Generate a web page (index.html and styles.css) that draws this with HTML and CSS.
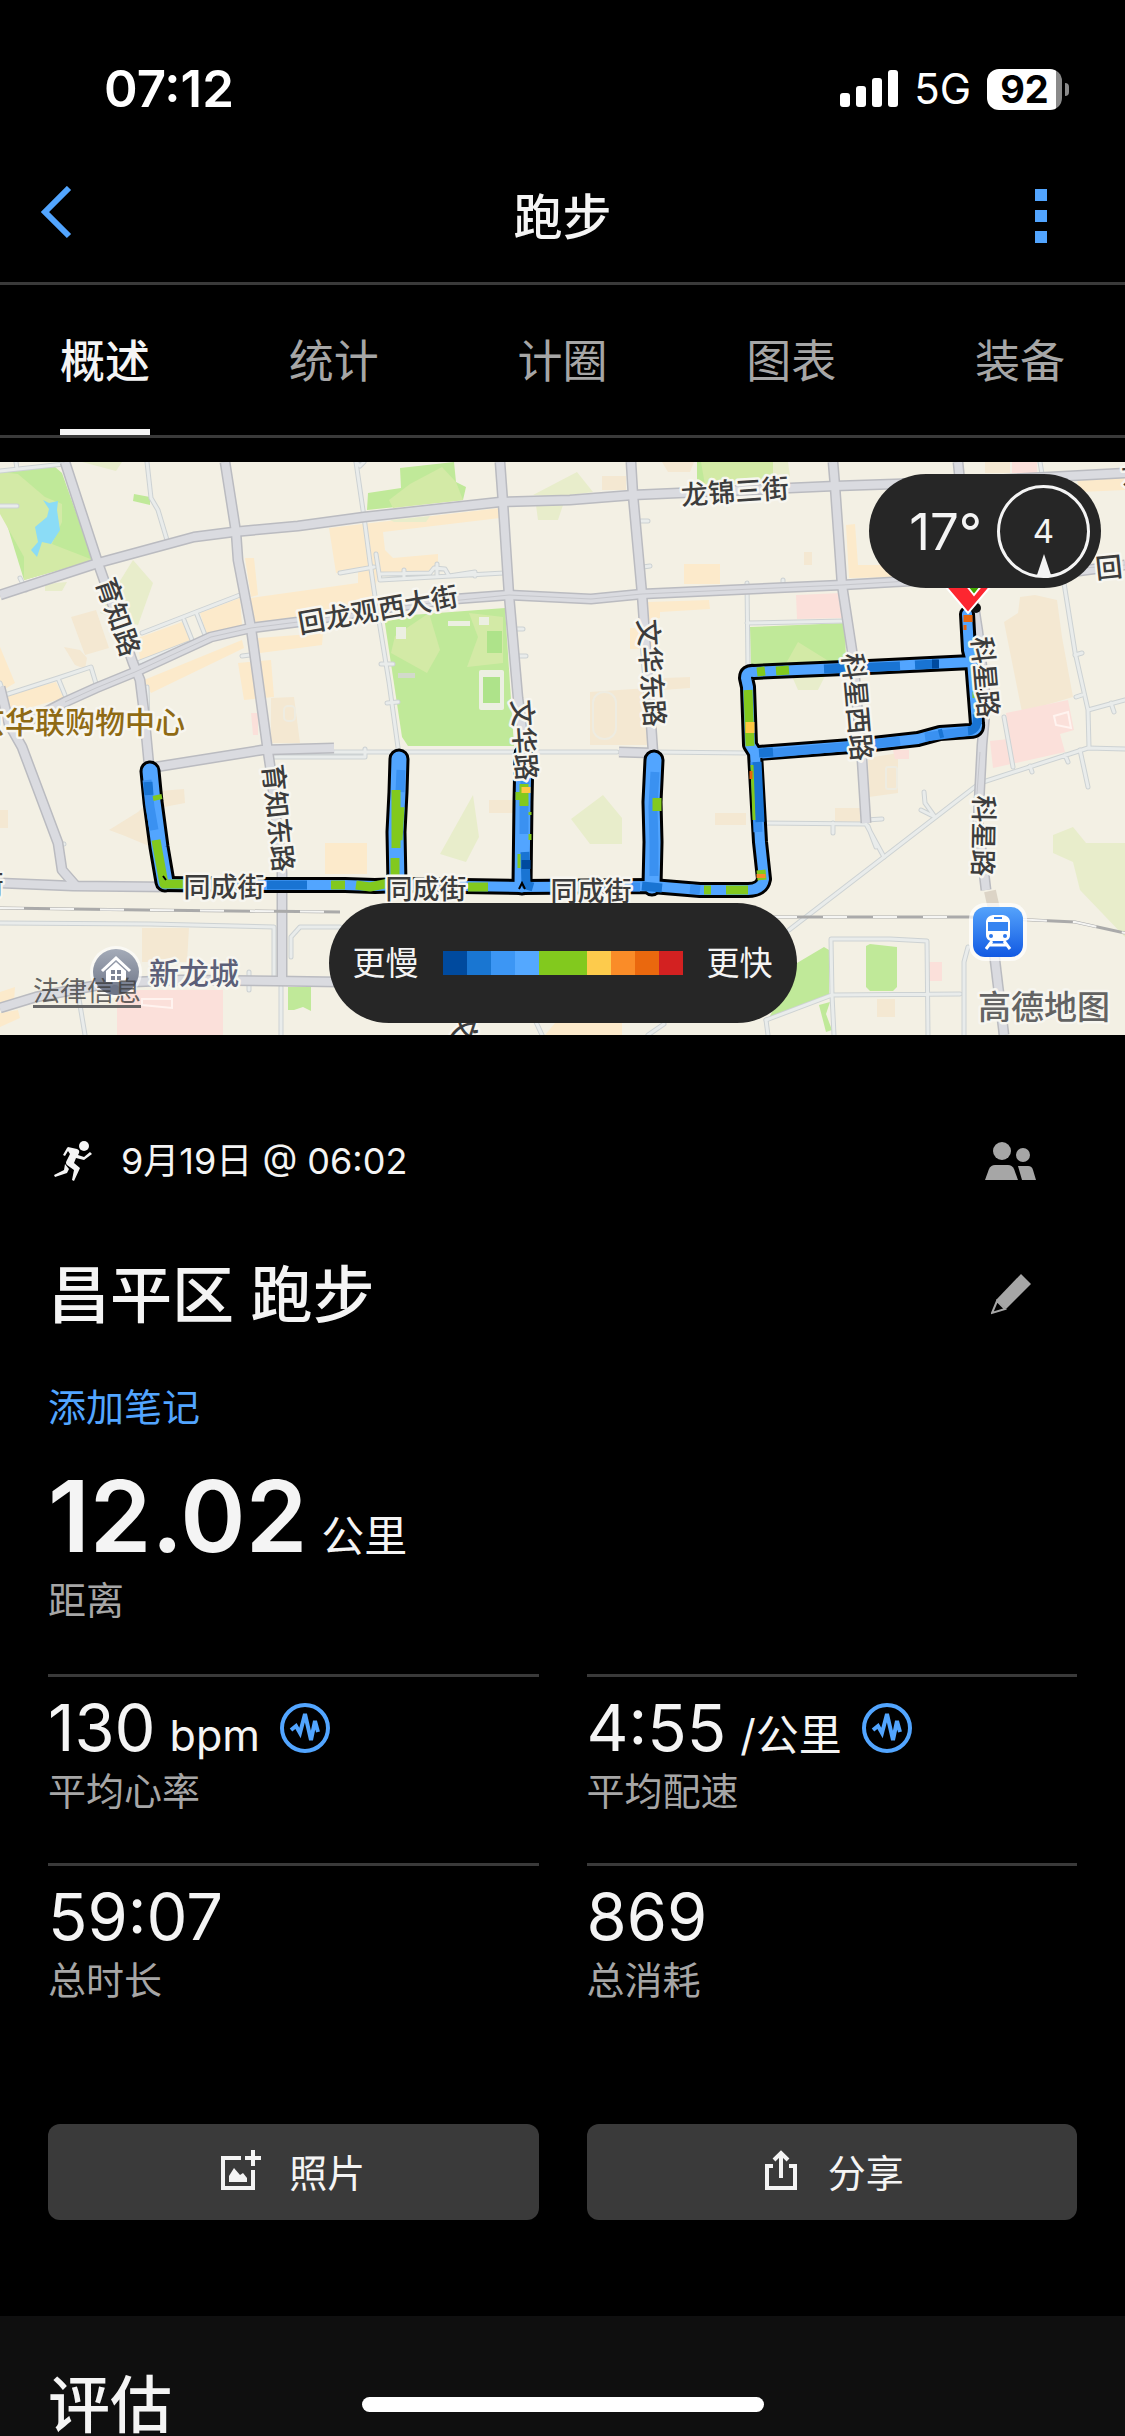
FILE: index.html
```html
<!DOCTYPE html>
<html lang="zh-CN">

<head>
    <meta charset="UTF-8">
    <meta name="viewport" content="width=device-width, initial-scale=1.0">
    <title>跑步</title>
    <link rel="stylesheet" href="styles.css">
</head>

<body>
    <div class="status-bar">
        <span class="time">07:12</span>
        <div class="status-icons">
            <svg class="signal" viewBox="0 0 58 38" aria-hidden="true">
                <rect x="0" y="23" width="10" height="14" rx="3" />
                <rect x="16" y="16" width="10" height="21" rx="3" />
                <rect x="32" y="8" width="10" height="29" rx="3" />
                <rect x="48" y="0" width="10" height="37" rx="3" />
            </svg>
            <span class="network">5G</span>
            <span class="battery">92</span>
        </div>
    </div>

    <header class="header">
        <button class="icon-button back" aria-label="返回">
            <svg width="36" height="60" viewBox="0 0 36 60" aria-hidden="true">
                <path d="M33 2L9 26L33 50" fill="none" stroke="#52a5ff" stroke-width="6" />
            </svg>
        </button>
        <h1>跑步</h1>
        <button class="icon-button more" aria-label="更多">
            <svg width="12" height="54" viewBox="0 0 12 54" fill="#52a5ff" aria-hidden="true">
                <rect width="12" height="12" />
                <rect y="21" width="12" height="12" />
                <rect y="42" width="12" height="12" />
            </svg>
        </button>
    </header>

    <nav class="tabs">
        <a href="#overview" class="tab active">概述</a>
        <a href="#stats" class="tab">统计</a>
        <a href="#laps" class="tab">计圈</a>
        <a href="#charts" class="tab">图表</a>
        <a href="#gear" class="tab">装备</a>
    </nav>

    <div class="map">
        <svg class="map-canvas" viewBox="0 0 1125 573" preserveAspectRatio="xMidYMid slice">
            <defs>
                <linearGradient id="trainFill" x1="0" y1="0" x2="0" y2="1">
                    <stop offset="0" stop-color="#55a3fb" />
                    <stop offset="1" stop-color="#1159e2" />
                </linearGradient>
                <linearGradient id="homeFill" x1="0" y1="0" x2="0" y2="1">
                    <stop offset="0" stop-color="#a4abb8" />
                    <stop offset="1" stop-color="#6d7486" />
                </linearGradient>

                <g id="majorRoads">
                    <path d="M65 0L98 101L133 201L140 218L144 250L149 303" />
                    <path d="M0 133L98 101L194 75L233 70L298 64L364 55L500 40L570 38L633 33L835 24L955 20L1125 11" />
                    <path d="M30 258L65 240L96 226L135 210L211 175L251 166L298 160L393 145L455 137L509 133L591 137L642 132L842 123L893 120L1064 111L1125 103" />
                    <path d="M225 0L236 70L238 98L251 166L267 283L271 310L282 411L282 520" />
                    <path d="M500 0L503 41L509 133L518 236L525 290" />
                    <path d="M631 0L633 33L642 132L653 290" />
                    <path d="M833 0L835 24L842 123L853 195L862 298L866 361" />
                    <path d="M958 0L970 118L978 170L986 240L982 283L978 360L986 428" />
                    <path d="M0 421L73 424L170 425L520 426L650 426" />
                    <path d="M0 225L9 262L22 285L58 381L62 408L76 424" />
                    <path d="M156 305L262 288L334 286" />
                    <path d="M0 546L36 535L109 521L182 518L276 519L340 520" />
                    <path d="M619 290L652 291" />
                    <path d="M994 490L1004 573" />
                </g>
                <g id="minorRoads">
                    <path d="M0 9L64 2M16 0L17 7" />
                    <path d="M147 0L151 36L158 48L167 78" />
                    <path d="M356 0L364 55L370 100L374 128L389 220L400 300M356 0L360 4L364 0" />
                    <path d="M376 92L380 118L504 111M380 112L430 111L434 106L445 107L449 114L475 110L475 114M404 108L404 116M437 102L437 114" />
                    <path d="M340 111L374 105" />
                    <path d="M142 171L196 150L240 133M184 158L192 178M196 150L205 173M140 200L189 181" />
                    <path d="M5 233L58 216L91 205L97 225M58 216L67 238M0 221L14 265" />
                    <path d="M381 202L393 202M387 241L398 240M242 194L250 193M517 167L523 167M518 194L526 194" />
                    <path d="M147 225L149 303M641 59L648 59M643 105L650 104" />
                    <path d="M747 121L748 205M747 161L845 159M783 118L783 127" />
                    <path d="M1040 0L1043 18M1064 121L1075 190L1088 248L1089 285M1088 248L1125 238M1111 241L1114 250" />
                    <path d="M1075 193L1082 191M1076 235L1082 233M1004 255L1013 305" />
                    <path d="M789 468L884 395L980 321L1088 286L1125 287M1030 304L1032 310M1065 293L1068 300" />
                    <path d="M762 361L866 362L884 395M866 358L882 357M833 361L833 371M868 364L876 385" />
                    <path d="M924 330L925 341L935 355L921 348M1080 288L1088 325" />
                    <path d="M273 290L617 290M273 295L365 295L365 287M653 290L748 291" />
                    <path d="M0 461L150 462L274 465L274 518M340 465L300 465L291 475L291 495" />
                    <path d="M78 531L85 573M281 525L281 573M249 510L249 528M57 383L64 382" />
                    <path d="M834 573L832 533L831 477L890 477L927 479L928 573M766 558L832 533L960 532" />
                    <path d="M968 485L964 500L964 573M766 558L768 573M648 573L664 562M536 560L542 573" />
                    <path d="M17 44L0 44M20 116L26 128" />
                </g>
                <g id="loops">
                    <path d="M165 422L267 423L345 423L375 424L400 423L522 425L652 424L700 428L748 428Q762 428 764 417L760 380L755 291L750 283L748 225L746 216Q746 209 754 210L773 209L868 205L972 200L969 188L967 152" />
                    <path d="M972 198L977 262Q978 269 970 269L940 271L918 277L864 283L759 291" />
                </g>
                <g id="stems">
                    <path d="M150 309L153 340L159 385L165 420" />
                    <path d="M399 297L398 330L396 370L397 422" />
                    <path d="M524 292L523 340L522 423" />
                    <path d="M654 298L652 340L653 380L652 424" />
                </g>
            </defs>

            <rect width="1125" height="573" fill="#f3f0e4" />

            <!-- blocks -->
            <g fill="#fceacb">
                <path d="M329 66L500 46V56L383 70L385 88L393 96L438 92V108L378 113L374 131L374 147L251 161V136L358 121V110L336 111Z" />
                <path d="M245 96H254L258 133L251 135Z" />
                <path d="M200 151L240 136L242 163L207 173ZM138 176L182 160L191 180L140 198Z" />
                <path d="M144 218L242 178L244 186L151 231ZM258 176L323 171L322 183L260 191Z" />
                <path d="M238 201L271 198L274 235L244 238ZM5 233L56 220L64 236L10 251ZM0 185L15 221L0 230Z" />
                <path d="M846 63L855 62L858 103H891L900 115L849 116ZM684 102H720V122H684Z" />
                <path d="M648 140L709 138L710 147L660 150V156L649 158ZM630 166H660V187H630Z" />
                <path d="M1077 18L1125 16V28L1080 30ZM325 381H367V412H325ZM555 561H622V573H545Z" />
                <path d="M0 530L15 525L14 540L0 545ZM0 551L18 548L20 556L0 565Z" />
            </g>
            <g fill="#f4e8d2">
                <path d="M71 155L96 148L109 186L85 193ZM64 185L80 188L87 196L85 207L75 203Z" />
                <path d="M271 236L294 235L300 281H271ZM602 14H626V28H602ZM662 0H694L690 10H668Z" />
                <path d="M590 230L648 226L665 216L690 215V226L650 229L648 283H590Z" />
                <path d="M1020 135L1035 133L1057 138L1062 175L1073 235L1022 250L1004 160L1018 151Z" />
                <path d="M109 368L138 350L160 329L184 327L185 341L164 345L149 384L125 374Z" />
                <path d="M0 348H8V366H0ZM489 338H513V351H489ZM142 466H189L187 500H142Z" />
                <path d="M715 351H746V363H715ZM835 346H860V360H835ZM868 296L898 291V331L869 335Z" />
                <path d="M877 537H895V555H877ZM804 90H812V103H804ZM985 0H1010V11H985Z" />
            </g>
            <g fill="#e8edcb">
                <path d="M82 0H122L116 9ZM133 98L153 121L138 163L100 151ZM45 122L67 120L62 129H45Z" />
                <path d="M533 33L577 10L593 30L555 35ZM536 43H563L558 58H538ZM773 0H788L790 14L773 24Z" />
                <path d="M473 333L479 375L466 400L440 392ZM571 357L603 333L622 356V382H590Z" />
                <path d="M1053 373L1073 365L1086 381H1125V475L1080 428L1073 400L1053 391Z" />
                <path d="M791 212H826L818 228H798ZM390 58L430 54L426 60H394Z" />
            </g>
            <g fill="#c0e999">
                <path d="M0 10L55 5L62 11L93 98L24 118L0 40Z" />
                <path d="M400 6L454 0L456 20L466 25L463 38L367 48L368 31L401 26Z" />
                <path d="M384 155L505 146L514 284H408L402 275Z" />
                <path d="M697 0H773V20L697 23ZM750 165L845 161L846 201L751 206Z" />
                <path d="M797 501L824 485L829 488V533L769 556Z" />
                <path d="M870 482L897 485V525L893 529H870L866 525V484Z" />
                <path d="M134 32L150 35V43L133 39ZM288 525H311V549L303 545L294 548H288Z" />
                <path d="M819 543L830 540L826 552L832 568L826 570Z" />
            </g>
            <g fill="#d3eaa6">
                <path d="M0 10L18 12L45 35L62 42V60L52 82L93 98L24 118L24 95L0 52Z" />
                <path d="M389 38L410 22L442 5L456 20L463 38L393 46Z" />
                <path d="M429 151L440 188L427 211L391 191L395 174ZM469 151L503 155V201L467 205L478 175Z" />
                <path d="M701 0H773V20L705 23ZM798 180L835 203L784 205Z" />
            </g>
            <g fill="#fbe0da">
                <path d="M796 133L841 131L842 156L797 157ZM251 251H258V273H253Z" />
                <path d="M1006 251L1068 238L1074 268L1060 272L1065 290L993 306L990 279L1008 277Z" />
                <path d="M117 528H223V573H117ZM893 288H909V297H895ZM929 500H942V519H929ZM1012 0H1037V11H1012Z" />
            </g>
            <path d="M43 38L49 41L58 39L57 48L60 68L51 82L42 80L37 95L31 88L38 80L35 65L47 55L49 47Z" fill="#8bdcf6" />
            <rect x="487" y="169" width="15" height="22" fill="#aee38a" />
            <g fill="#ecefe2">
                <rect x="479" y="208" width="25" height="40" rx="2" />
                <rect x="396" y="165" width="10" height="12" />
                <rect x="479" y="155" width="10" height="8" />
                <rect x="448" y="159" width="22" height="5" />
            </g>
            <rect x="483" y="215" width="17" height="26" fill="#aee38a" />
            <rect x="398" y="211" width="17" height="5" fill="#d3dacb" />
            <g fill="none" stroke="#eeece1" stroke-width="2">
                <rect x="593" y="230" width="23" height="47" rx="11" />
                <rect x="284" y="244" width="11" height="15" rx="4" />
                <rect x="886" y="305" width="11" height="22" rx="2" />
                <path d="M142 537H172V546L142 543ZM1054 254L1068 250L1071 266L1056 263Z" stroke="#fff3ef" />
            </g>

            <!-- roads -->
            <use href="#minorRoads" class="minor-edge" />
            <use href="#minorRoads" class="minor-fill" />
            <use href="#majorRoads" class="major-edge" />
            <use href="#majorRoads" class="major-fill" />
            <path d="M65 240L96 226L135 210L211 175L251 166L298 160L393 145L509 133L591 137L642 132L842 123L893 120L1125 103M980 290L976 345" fill="none" stroke="#c6c7cc" stroke-width="1" />
            <path d="M990 429L994 447" stroke="#dcd4c6" stroke-width="12" />
            <path class="rail" d="M0 446L145 448L340 450M773 455L969 455L1075 460L1125 471" />
            <path class="rail-dash" d="M0 446L145 448L340 450M773 455L969 455L1075 460L1125 471" />

            <!-- running route -->
            <use href="#loops" class="route-edge" />
            <use href="#stems" class="route-edge wide" />
            <use href="#loops" class="route" />
            <use href="#stems" class="route wide" />
            <g class="route-part">
                <g stroke="#3a91f1">
                    <path d="M147 318L150 345L154 368M401 308L400 330M655 310L653 345L654 382L654 414" />
                    <path d="M524 340L524 372M525 310V322M762 292L864 283L900 279M925 275L970 269" />
                    <path d="M600 425L640 425M690 427L700 428M755 300L758 370" />
                </g>
                <g stroke="#1974d3">
                    <path d="M148 320L149 333M267 423L307 423M525 390L526 423L533 425M759 291L773 290M757 300L760 360" />
                    <path d="M824 207L900 204M915 203L938 202M977 252Q979 268 968 269M642 424L662 426M939 272L943 271" />
                </g>
                <g stroke="#004a9e">
                    <path d="M932 202L939 202M526 398V407" />
                </g>
                <g stroke="#82c91e">
                    <path d="M156 378L160 400L164 422L190 422M157 333L158 338M396 328L396 386M400 345L398 378M395 396V415" />
                    <path d="M331 423L345 423M356 423L370 425L389 421M468 425L488 425M704 428L711 428M726 428L748 428" />
                    <path d="M524 322V344M520 330V338M748 228L750 284M757 210L765 209M776 209L789 208M657 336V349" />
                    <path d="M761 408L762 418M405 420L395 421" />
                </g>
                <path d="M750 260V271M526 325V331" stroke="#ffc843" />
                <path d="M968 153L968 160" stroke="#e5650d" />
                <path d="M761 412V416" stroke="#f98b28" />
                <path d="M752 303L754 358M519 392V406M530 372V378M530 350V353M974 230V236" stroke="#82c91e" class="thin" />
                <path d="M751 309V317M965 163V168" stroke="#e5650d" class="thin" />
            </g>
            <path d="M163 414L166 418M519 427L522 421L525 427" fill="none" stroke="#000" stroke-width="2" />

            <!-- start and finish pins -->
            <circle cx="976" cy="146" r="5" fill="#111" />
            <path d="M940 118L968 151L996 118Z" fill="#fd2630" stroke="#fff" stroke-width="2" />
            <path d="M962 118L974 133L986 118Z" fill="#43a800" stroke="#fff" stroke-width="2" />

            <!-- street names -->
            <g class="street">
                <text transform="translate(735 30) rotate(-4)">龙锦三街</text>
                <text transform="translate(378 148) rotate(-10)">回龙观西大街</text>
                <text transform="translate(118 155) rotate(71)">育知路</text>
                <text transform="translate(524 278) rotate(86)">文华路</text>
                <text transform="translate(651 211) rotate(86)">文华东路</text>
                <text transform="translate(857 245) rotate(85)">科星西路</text>
                <text transform="translate(985 215) rotate(85)">科星路</text>
                <text transform="translate(983 374) rotate(91)">科星路</text>
                <text transform="translate(278 356) rotate(84)">育知东路</text>
                <text x="224" y="425">同成街</text>
                <text x="426" y="427">同成街</text>
                <text x="591" y="429">同成街</text>
                <text x="-10" y="423">街</text>
                <text transform="translate(465 566) rotate(108)">文</text>
                <text transform="translate(1109 106) rotate(-6)">回</text>
                <text transform="translate(1135 12) rotate(-6)">龙</text>
            </g>
            <text class="mall" x="185" y="260">北京华联购物中心</text>

            <!-- residential pin -->
            <circle cx="116" cy="510" r="26" fill="#fff" opacity="0.6" />
            <circle cx="116" cy="510" r="23" fill="url(#homeFill)" />
            <circle cx="115" cy="528" r="5" fill="#6d7486" />
            <path d="M102 509L116 496L130 509" fill="none" stroke="#fff" stroke-width="3" />
            <path d="M106 509L116 500L126 509V520H106Z" fill="#fff" />
            <path d="M111 508H115V512H111ZM117 508H121V512H117ZM111 514H115V518H111ZM117 514H121V518H117Z" fill="#7d8495" />
            <text class="place" x="149" y="511">新龙城</text>

            <!-- train station -->
            <rect x="969" y="441" width="58" height="58" rx="16" fill="#fff" opacity="0.7" />
            <rect x="973" y="445" width="50" height="50" rx="12" fill="url(#trainFill)" />
            <path d="M993 453H1003Q1009 454 1010 459V473Q1010 478 1005 479H991Q986 478 986 473V459Q987 454 993 453Z" fill="#fff" />
            <path d="M988 460H1008V469H988ZM994 455H1002V457H994Z" fill="#3684f1" />
            <circle cx="991" cy="474" r="2" fill="#2b77ec" />
            <circle cx="1005" cy="474" r="2" fill="#2b77ec" />
            <path d="M992 479L986 487M1004 479L1010 487M990 483H1006" fill="none" stroke="#fff" stroke-width="3" />
            <text class="map-brand" x="978" y="545">高德地图</text>
        </svg>

        <a class="legal" href="#legal">法律信息</a>

        <div class="weather">
            <span class="temperature">17°</span>
            <div class="wind">
                4
                <svg class="wind-arrow" width="16" height="24" viewBox="0 0 16 24" aria-hidden="true">
                    <path d="M8 1L15 22Q8 25 1 22Z" fill="#f4f4f4" />
                </svg>
            </div>
        </div>

        <div class="legend">
            <span>更慢</span>
            <div class="scale">
                <i class="pace-1"></i>
                <i class="pace-2"></i>
                <i class="pace-3"></i>
                <i class="pace-4"></i>
                <i class="pace-5"></i>
                <i class="pace-5"></i>
                <i class="pace-6"></i>
                <i class="pace-7"></i>
                <i class="pace-8"></i>
                <i class="pace-9"></i>
            </div>
            <span>更快</span>
        </div>
    </div>

    <main class="summary" id="overview">
        <div class="row date-row">
            <svg class="runner" width="38" height="40" viewBox="0 0 38 40" fill="#f4f4f4" aria-hidden="true">
                <circle cx="30" cy="5" r="5" />
                <path d="M14 6L23 8Q26 9 25 12L24 14L30 16L36 11L38 13L30 19L22 17L20 22L26 27L20 40L18 39L20 29L13 24Q11 22 13 19L16 13L14 10L11 15L9 14L13 7Z" />
                <path d="M11 23L15 28L13 32L1 36L0 34L10 29Z" />
            </svg>
            <span class="date">9月19日 @ 06:02</span>
            <button class="icon-button side" aria-label="同伴">
                <svg width="52" height="38" viewBox="0 0 52 38" fill="#a6a6a6" aria-hidden="true">
                    <circle cx="17" cy="9" r="9" />
                    <circle cx="38" cy="13" r="7" />
                    <path d="M0 38L4 27Q6 23 10 23H23Q27 23 29 27L33 38Z" />
                    <path d="M33 24H43Q47 24 48 28L51 38H37Z" />
                </svg>
            </button>
        </div>
        <div class="row title-row">
            <h2>昌平区 跑步</h2>
            <button class="icon-button side" aria-label="编辑">
                <svg width="40" height="41" viewBox="0 0 40 41" aria-hidden="true">
                    <path d="M30 0L40 10L15 35L5 26Z" fill="#a6a6a6" />
                    <path d="M6 27L1 39L14 35Z" fill="none" stroke="#a6a6a6" stroke-width="2" />
                </svg>
            </button>
        </div>
        <a class="note" href="#note">添加笔记</a>

        <div class="distance">
            <div class="value">12.02 <span class="unit">公里</span></div>
            <div class="label">距离</div>
        </div>

        <div class="stats">
            <div class="stat">
                <div class="value">130 <span class="unit">bpm</span>
                    <svg class="pulse" width="50" height="50" viewBox="0 0 50 50" aria-hidden="true">
                        <circle cx="25" cy="25" r="23" />
                        <path d="M11 27L16 23L20 30L25 11L31 37L35 18L38 29" />
                    </svg>
                </div>
                <div class="label">平均心率</div>
            </div>
            <div class="stat">
                <div class="value">4:55 <span class="unit">/公里</span>
                    <svg class="pulse" width="50" height="50" viewBox="0 0 50 50" aria-hidden="true">
                        <circle cx="25" cy="25" r="23" />
                        <path d="M11 27L16 23L20 30L25 11L31 37L35 18L38 29" />
                    </svg>
                </div>
                <div class="label">平均配速</div>
            </div>
            <div class="stat">
                <div class="value">59:07</div>
                <div class="label">总时长</div>
            </div>
            <div class="stat">
                <div class="value">869</div>
                <div class="label">总消耗</div>
            </div>
        </div>

        <div class="actions">
            <button class="action">
                <svg width="40" height="40" viewBox="0 0 40 40" aria-hidden="true">
                    <path d="M20 8H2V38H32V20M32 0V16M24 8H40" fill="none" stroke="#f4f4f4" stroke-width="4" />
                    <path d="M8 32V26L13 18L19 25L22 23L26 28V32Z" fill="#f4f4f4" />
                </svg>
                照片
            </button>
            <button class="action">
                <svg width="40" height="40" viewBox="0 0 40 40" fill="none" stroke="#f4f4f4" stroke-width="4" aria-hidden="true">
                    <path d="M13 16H7V38H35V16H29" />
                    <path d="M21 28V3M14 10L21 3L28 10" />
                </svg>
                分享
            </button>
        </div>
    </main>

    <section class="evaluation">
        <h2>评估</h2>
    </section>
    <div class="home-indicator"></div>
</body>

</html>
```
FILE: styles.css
```css
* {
    box-sizing: border-box;
}

body {
    margin: 0;
    background-color: #000;
    color: #f4f4f4;
    font-family: Inter, "Noto Sans CJK SC", sans-serif;
    font-size: 38px;
}

h1,
h2 {
    margin: 0;
    font-weight: 500;
}

a {
    color: inherit;
    text-decoration: none;
}

button {
    border: none;
    color: inherit;
    font: inherit;
    cursor: pointer;
}

svg {
    display: block;
}

/* status bar */
.status-bar {
    display: flex;
    justify-content: space-between;
    align-items: center;
    height: 150px;
    padding: 28px 56px 0 104px;
    color: #fff;
}

.time {
    font-size: 51px;
    font-weight: 600;
    line-height: 122px;
}

.status-icons {
    display: flex;
    align-items: center;
    gap: 16px;
}

.signal {
    width: 58px;
    height: 38px;
    fill: #fff;
}

.network {
    font-size: 42px;
    line-height: 48px;
}

.battery {
    position: relative;
    width: 75px;
    height: 41px;
    margin-right: 7px;
    border-radius: 12px;
    background: linear-gradient(to right, #fff 69px, #8a8a8a 69px);
    color: #000;
    font-size: 38px;
    font-weight: 700;
    line-height: 41px;
    text-align: center;
}

.battery::after {
    content: "";
    position: absolute;
    top: 14px;
    right: -7px;
    width: 4px;
    height: 13px;
    border-radius: 0 4px 4px 0;
    background-color: #8a8a8a;
}

/* header */
.header {
    display: flex;
    justify-content: space-between;
    align-items: center;
    height: 135px;
    border-bottom: 3px solid #3a3a3a;
}

.header h1 {
    padding-top: 3px;
    font-size: 49px;
    line-height: 72px;
}

.icon-button {
    display: flex;
    align-items: center;
    padding: 0;
    background: none;
}

.back,
.more {
    width: 120px;
    height: 96px;
}

.back {
    padding-left: 36px;
}

.more {
    justify-content: flex-end;
    padding-right: 78px;
}

/* tabs */
.tabs {
    display: flex;
    justify-content: space-between;
    padding: 0 60px;
    border-bottom: 3px solid #3a3a3a;
}

.tab {
    height: 150px;
    border-bottom: 6px solid transparent;
    color: #a6a6a6;
    font-size: 45px;
    line-height: 153px;
}

.tab.active {
    border-color: #f4f4f4;
    color: #f4f4f4;
    font-weight: 500;
}

/* map */
.map {
    position: relative;
    margin-top: 24px;
    overflow: hidden;
}

.map-canvas {
    width: 100%;
    height: auto;
}

.major-edge,
.major-fill,
.minor-edge,
.minor-fill,
.route-edge,
.route,
.route-part,
.rail,
.rail-dash {
    fill: none;
    stroke-linejoin: round;
}

.major-edge {
    stroke: #babbc0;
    stroke-width: 11px;
}

.major-fill {
    stroke: #dadbe0;
    stroke-width: 8px;
}

.minor-edge {
    stroke: #cdd2d3;
    stroke-width: 5px;
    stroke-linecap: round;
}

.minor-fill {
    stroke: #e9eceb;
    stroke-width: 3px;
    stroke-linecap: round;
}

.rail {
    stroke: #aaa;
    stroke-width: 3px;
}

.rail-dash {
    stroke: #f5f5f3;
    stroke-width: 2px;
    stroke-dasharray: 24 26;
}

.route-edge {
    stroke: #000;
    stroke-width: 16px;
    stroke-linecap: round;
}

.route {
    stroke: #52a5ff;
    stroke-width: 10px;
    stroke-linecap: round;
}

.route-edge.wide {
    stroke-width: 21px;
}

.route.wide {
    stroke-width: 15px;
}

.route-part {
    stroke-width: 9px;
}

.thin {
    stroke-width: 3px;
}

.street,
.mall,
.place,
.map-brand {
    dominant-baseline: central;
    paint-order: stroke;
    stroke: #f7f6f0;
    stroke-width: 5px;
    stroke-linejoin: round;
    font-weight: 500;
}

.street {
    fill: #3c3c3c;
    font-size: 27px;
    text-anchor: middle;
}

.mall {
    fill: #8f6a14;
    font-size: 30px;
    text-anchor: end;
}

.place {
    fill: #5c5f78;
    font-size: 30px;
}

.map-brand {
    fill: #636363;
    font-size: 33px;
}

.legal {
    position: absolute;
    bottom: 27px;
    left: 33px;
    border-bottom: 3px solid #666;
    color: rgba(60, 60, 60, 0.8);
    font-size: 27px;
    line-height: 27px;
}

.weather {
    position: absolute;
    top: 12px;
    right: 24px;
    display: flex;
    align-items: center;
    gap: 15px;
    height: 114px;
    padding: 0 11px 0 40px;
    border-radius: 57px;
    background-color: #262626;
}

.temperature {
    font-size: 51px;
}

.wind {
    position: relative;
    width: 93px;
    height: 93px;
    border: 3px solid #f4f4f4;
    border-radius: 50%;
    font-size: 33px;
    line-height: 87px;
    text-align: center;
}

.wind-arrow {
    position: absolute;
    bottom: -2px;
    left: 36px;
}

.legend {
    position: absolute;
    bottom: 12px;
    left: 50%;
    transform: translateX(-50%);
    display: flex;
    align-items: center;
    gap: 24px;
    height: 120px;
    padding: 0 24px;
    border-radius: 60px;
    background-color: #262626;
    font-size: 33px;
    line-height: 48px;
    white-space: nowrap;
}

.scale {
    display: flex;
}

.scale i {
    width: 24px;
    height: 24px;
}

.pace-1 {
    background-color: #004a9e;
}

.pace-2 {
    background-color: #1976d2;
}

.pace-3 {
    background-color: #3c96f4;
}

.pace-4 {
    background-color: #54a8ff;
}

.pace-5 {
    background-color: #82c91e;
}

.pace-6 {
    background-color: #fdcb4c;
}

.pace-7 {
    background-color: #fa8c28;
}

.pace-8 {
    background-color: #ea680e;
}

.pace-9 {
    background-color: #d32121;
}

/* summary */
.summary {
    padding: 96px 48px;
}

.row {
    display: flex;
    align-items: center;
}

.side {
    justify-content: center;
    width: 132px;
    height: 60px;
    margin-left: auto;
}

.date-row {
    height: 60px;
}

.runner {
    margin: 0 29px 0 6px;
}

.date {
    font-size: 36px;
    line-height: 48px;
}

.title-row {
    margin-top: 66px;
}

.title-row h2,
.evaluation h2 {
    font-size: 62px;
    line-height: 72px;
}

.title-row h2 {
    padding-top: 3px;
}

.note {
    display: block;
    margin-top: 45px;
    color: #52a5ff;
    line-height: 60px;
}

.value {
    display: flex;
    align-items: baseline;
    gap: 14px;
    height: 72px;
    font-size: 65px;
    line-height: 72px;
}

.unit {
    font-size: 43px;
}

.label {
    margin-top: 3px;
    color: #a6a6a6;
    line-height: 48px;
}

.distance {
    margin-top: 31px;
}

.distance .value {
    height: 96px;
    font-size: 99px;
    font-weight: 600;
    line-height: 96px;
}

.distance .unit {
    font-weight: 400;
}

.distance .label {
    margin-top: 12px;
}

.stats {
    display: grid;
    grid-template-columns: 1fr 1fr;
    column-gap: 48px;
    margin-top: 50px;
}

.stat {
    padding: 15px 0 48px;
    border-top: 3px solid #3a3a3a;
}

.pulse {
    align-self: center;
    margin-left: 6px;
    fill: none;
    stroke: #52a5ff;
    stroke-width: 4px;
}

.actions {
    display: grid;
    grid-template-columns: 1fr 1fr;
    column-gap: 48px;
    margin-top: 72px;
}

.action {
    display: flex;
    justify-content: center;
    align-items: center;
    gap: 28px;
    height: 96px;
    padding: 0 0 4px;
    border-radius: 12px;
    background-color: #3a3a3a;
}

.evaluation {
    padding: 60px 48px 0;
    background-color: #0f0f0f;
}

.evaluation h2 {
    line-height: 60px;
}

.home-indicator {
    position: fixed;
    bottom: 24px;
    left: 50%;
    width: 402px;
    height: 15px;
    border-radius: 8px;
    background-color: #fff;
    transform: translateX(-50%);
}
```
